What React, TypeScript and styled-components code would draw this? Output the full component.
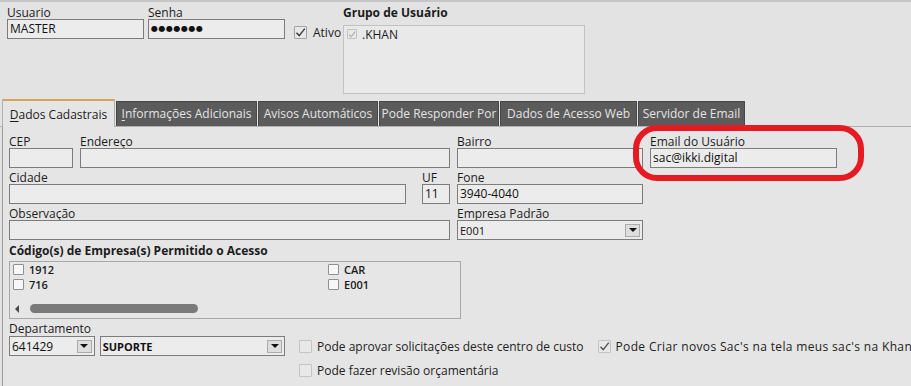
import React from 'react';
import styled, { createGlobalStyle } from 'styled-components';

const GlobalStyle = createGlobalStyle`
  html, body {
    margin: 0;
    padding: 0;
    background: #e3e3e3;
  }
  body {
    font-family: 'Open Sans', 'Noto Sans', sans-serif;
    font-size: 12px;
    color: #1c1c1c;
  }
`;

// whole window
const Screen = styled.div`
  position: relative;
  width: 911px;
  height: 386px;
  overflow: hidden;
  box-sizing: border-box;
  background: #e3e3e3;
  border-top: 2px solid #c6c6c6;
  display: flex;
  flex-direction: column;
`;

const AccentLine = styled.div`
  position: absolute;
  top: -2px;
  left: 0;
  width: 70px;
  height: 2px;
  background: #f2a27c;
`;

/* ---------- header (user / password / group) ---------- */

const Header = styled.div`
  height: 97px;
  box-sizing: border-box;
  padding: 4px 0 0 7px;
  display: flex;
  align-items: flex-start;
`;

const Field = styled.div<{ $w?: number }>`
  display: flex;
  flex-direction: column;
  width: ${(p) => (p.$w ? `${p.$w}px` : 'auto')};
  flex: ${(p) => (p.$w ? 'none' : '1')};
`;

const Label = styled.div<{ $bold?: boolean }>`
  height: 13px;
  line-height: 13px;
  font-size: 12px;
  font-weight: ${(p) => (p.$bold ? 700 : 400)};
  color: #1c1c1c;
  white-space: nowrap;
`;

const Input = styled.div<{ $size?: number }>`
  height: 20px;
  box-sizing: border-box;
  border: 1px solid #7c7c7c;
  background: #ececec;
  padding: 0 2px;
  font-size: ${(p) => p.$size ?? 12}px;
  line-height: 18px;
  color: #111;
  white-space: nowrap;
  overflow: hidden;
`;

const Dots = styled.span`
  font-family: 'DejaVu Sans', sans-serif;
  font-size: 8px;
  letter-spacing: 0.5px;
  vertical-align: top;
`;

const HeaderGap = styled.div<{ $w: number }>`
  width: ${(p) => p.$w}px;
  flex: none;
`;

const AtivoBox = styled.label`
  display: flex;
  align-items: center;
  gap: 6px;
  width: 49px;
  margin-top: 18px;
  font-size: 12px;
  color: #1c1c1c;
`;

const GroupList = styled.div`
  margin-top: 6px;
  width: 242px;
  height: 69px;
  box-sizing: border-box;
  border: 1px solid #c2c2c2;
  background: #e9e9e9;
  padding: 3px 3px;
  display: flex;
  align-items: flex-start;
  gap: 5px;
  font-size: 12px;
  line-height: 12px;
`;

/* ---------- check boxes ---------- */

const Box = styled.span<{ $size: number; $tone: 'dark' | 'light' | 'white' }>`
  width: ${(p) => p.$size}px;
  height: ${(p) => p.$size}px;
  box-sizing: border-box;
  flex: none;
  display: inline-flex;
  align-items: center;
  justify-content: center;
  border: 1px solid
    ${(p) => (p.$tone === 'dark' ? '#a2a2a2' : p.$tone === 'white' ? '#909090' : '#c3c3c3')};
  background: ${(p) => (p.$tone === 'white' ? '#f7f7f7' : '#e8e8e8')};
  border-radius: 1px;
`;

const Check = ({ color }: { color: string }) => (
  <svg width="11" height="11" viewBox="0 0 11 11">
    <path d="M1.5 5.8 L4.2 8.6 L9.8 1.6" fill="none" stroke={color} strokeWidth="1.4" />
  </svg>
);

const CheckBox: React.FC<{ size?: number; tone?: 'dark' | 'light' | 'white'; checked?: boolean; checkColor?: string }> = ({
  size = 13,
  tone = 'dark',
  checked,
  checkColor = '#3a3a3a',
}) => <Box $size={size} $tone={tone}>{checked && <Check color={checkColor} />}</Box>;

/* ---------- tabs ---------- */

const TabStrip = styled.div`
  height: 27px;
  display: flex;
  align-items: flex-end;
  gap: 1px;
  padding-left: 2px;
  border-bottom: 1px solid #b0b0b0;
`;

const Tab = styled.div<{ $active?: boolean; $w: number }>`
  box-sizing: border-box;
  width: ${(p) => p.$w}px;
  height: ${(p) => (p.$active ? '28px' : '25px')};
  margin-bottom: ${(p) => (p.$active ? '-1px' : '0')};
  padding-top: ${(p) => (p.$active ? '2px' : '0')};
  text-align: center;
  line-height: 23px;
  font-size: 12px;
  white-space: nowrap;
  background: ${(p) => (p.$active ? '#e5e5e5' : '#5b5b5b')};
  color: ${(p) => (p.$active ? '#1c1c1c' : '#e4e4e4')};
  border: 1px solid ${(p) => (p.$active ? '#b0b0b0' : '#474747')};
  border-top: ${(p) => (p.$active ? '2px solid #d7a453' : '1px solid #474747')};
  border-bottom: none;
  border-radius: 1px 1px 0 0;

  u {
    text-decoration: underline;
    text-underline-offset: 2px;
  }
`;

/* ---------- panel ---------- */

const Panel = styled.div`
  flex: 1;
  margin-left: 2px;
  border-left: 1px solid #9c9c9c;
  background: #e5e5e5;
  padding: 8px 0 0 6px;
  display: flex;
  flex-direction: column;
`;

const FormGrid = styled.div`
  display: grid;
  grid-template-columns: 441px 186px 187px;
  column-gap: 7px;
  row-gap: 3px;
`;

const Pair = styled.div<{ $gap: number }>`
  display: flex;
  gap: ${(p) => p.$gap}px;
`;

const Highlight = styled.div`
  position: absolute;
  left: 633px;
  top: 123px;
  width: 231px;
  height: 56px;
  box-sizing: border-box;
  border: 6px solid #e41b23;
  border-radius: 24px;
  pointer-events: none;
`;

const Section = styled.div<{ $top: number }>`
  margin-top: ${(p) => p.$top}px;
`;

const CompanyList = styled.div`
  margin-top: 4px;
  width: 452px;
  height: 58px;
  box-sizing: border-box;
  border: 1px solid #a8a8a8;
  background: #e6e6e6;
  display: flex;
  flex-direction: column;
`;

const CompanyGrid = styled.div`
  display: grid;
  grid-template-columns: 315px 1fr;
  grid-auto-rows: 15px;
  padding: 0 0 0 3px;
`;

const CompanyItem = styled.div`
  display: flex;
  align-items: center;
  gap: 5px;
  height: 15px;
  line-height: 15px;
  font-size: 11px;
  font-weight: 600;
  color: #1a1a1a;
`;

const ScrollBar = styled.div`
  margin-top: auto;
  margin-bottom: 5px;
  height: 9px;
  display: flex;
  align-items: center;
  padding-left: 5px;
`;

const ArrowLeft = styled.span`
  width: 0;
  height: 0;
  border-top: 4px solid transparent;
  border-bottom: 4px solid transparent;
  border-right: 4px solid #4a4a4a;
`;

const Thumb = styled.span`
  margin-left: 11px;
  width: 168px;
  height: 9px;
  border-radius: 5px;
  background: #7a7a7a;
`;

const BottomRow = styled.div`
  display: flex;
  align-items: flex-start;
  margin-top: 3px;
`;

const SelectRow = styled.div`
  display: flex;
  gap: 5px;
  margin-top: 1px;
`;

const Select = styled.div<{ $w: number; $bold?: boolean; $size?: number }>`
  width: ${(p) => p.$w}px;
  height: 20px;
  box-sizing: border-box;
  border: 1px solid #7c7c7c;
  background: #ececec;
  display: flex;
  align-items: center;
  padding-left: 2px;
  font-size: ${(p) => p.$size ?? 12}px;
  font-weight: ${(p) => (p.$bold ? 700 : 400)};
  color: #111;
`;

const SelectText = styled.span`
  flex: 1;
  white-space: nowrap;
`;

const DropButton = styled.span`
  width: 15px;
  height: 13px;
  margin-right: 2px;
  box-sizing: border-box;
  border: 1px solid #ababab;
  background: #dedede;
  display: flex;
  align-items: center;
  justify-content: center;

  &::after {
    content: '';
    width: 0;
    height: 0;
    border-left: 4px solid transparent;
    border-right: 4px solid transparent;
    border-top: 4px solid #111;
  }
`;

const Options = styled.div`
  margin: 18px 0 0 14px;
  display: flex;
  flex-direction: column;
  gap: 11px;
`;

const OptionRow = styled.div`
  display: flex;
  gap: 14px;
`;

const Option = styled.div<{ $spread?: boolean }>`
  display: flex;
  align-items: center;
  gap: 5px;
  height: 13px;
  font-size: 12px;
  letter-spacing: ${(p) => (p.$spread ? '0.35px' : 'normal')};
  color: #222;
  white-space: nowrap;
`;

const tabs = [
  { key: 'I', rest: 'nformações Adicionais', w: 141 },
  { rest: 'Avisos Automáticos', w: 120 },
  { rest: 'Pode Responder Por', w: 120 },
  { rest: 'Dados de Acesso Web', w: 137 },
  { rest: 'Servidor de Email', w: 107 },
];

const companies = ['1912', 'CAR', '716', 'E001'];

export default function App() {
  return (
    <>
      <GlobalStyle />
      <Screen>
        <AccentLine />

        <Header>
          <Field $w={137}>
            <Label>Usuario</Label>
            <Input>MASTER</Input>
          </Field>
          <HeaderGap $w={4} />
          <Field $w={137}>
            <Label>Senha</Label>
            <Input>
              <Dots>●●●●●●●</Dots>
            </Input>
          </Field>
          <HeaderGap $w={9} />
          <AtivoBox>
            <CheckBox checked />
            Ativo
          </AtivoBox>
          <Field $w={242}>
            <Label $bold>Grupo de Usuário</Label>
            <GroupList>
              <CheckBox size={10} tone="light" checked checkColor="#a8a8a8" />
              .KHAN
            </GroupList>
          </Field>
        </Header>

        <TabStrip>
          <Tab $active $w={113}>
            <u>D</u>ados Cadastrais
          </Tab>
          {tabs.map((t) => (
            <Tab key={t.rest} $w={t.w}>
              {t.key && <u>{t.key}</u>}
              {t.rest}
            </Tab>
          ))}
        </TabStrip>

        <Panel>
          <FormGrid>
            <Pair $gap={7}>
              <Field $w={64}>
                <Label>CEP</Label>
                <Input />
              </Field>
              <Field>
                <Label>Endereço</Label>
                <Input />
              </Field>
            </Pair>
            <Field>
              <Label>Bairro</Label>
              <Input />
            </Field>
            <Field>
              <Label>Email do Usuário</Label>
              <Input>sac@ikki.digital</Input>
            </Field>

            <Pair $gap={16}>
              <Field>
                <Label>Cidade</Label>
                <Input />
              </Field>
              <Field $w={28}>
                <Label>UF</Label>
                <Input>11</Input>
              </Field>
            </Pair>
            <Field>
              <Label>Fone</Label>
              <Input>3940-4040</Input>
            </Field>
            <div />

            <Field>
              <Label>Observação</Label>
              <Input />
            </Field>
            <Field>
              <Label>Empresa Padrão</Label>
              <Select $w={186} $size={11}>
                <SelectText>E001</SelectText>
                <DropButton />
              </Select>
            </Field>
            <div />
          </FormGrid>

          <Section $top={4}>
            <Label $bold>Código(s) de Empresa(s) Permitido o Acesso</Label>
            <CompanyList>
              <CompanyGrid>
                {companies.map((c) => (
                  <CompanyItem key={c}>
                    <CheckBox size={11} tone="white" />
                    {c}
                  </CompanyItem>
                ))}
              </CompanyGrid>
              <ScrollBar>
                <ArrowLeft />
                <Thumb />
              </ScrollBar>
            </CompanyList>
          </Section>

          <BottomRow>
            <Field $w={276}>
              <Label>Departamento</Label>
              <SelectRow>
                <Select $w={86}>
                  <SelectText>641429</SelectText>
                  <DropButton />
                </Select>
                <Select $w={186} $bold $size={11}>
                  <SelectText>SUPORTE</SelectText>
                  <DropButton />
                </Select>
              </SelectRow>
            </Field>
            <Options>
              <OptionRow>
                <Option>
                  <CheckBox tone="light" />
                  Pode aprovar solicitações deste centro de custo
                </Option>
                <Option $spread>
                  <CheckBox tone="light" checked checkColor="#555" />
                  Pode Criar novos Sac's na tela meus sac's na Khan
                </Option>
              </OptionRow>
              <Option>
                <CheckBox tone="light" />
                Pode fazer revisão orçamentária
              </Option>
            </Options>
          </BottomRow>
        </Panel>

        <Highlight />
      </Screen>
    </>
  );
}
